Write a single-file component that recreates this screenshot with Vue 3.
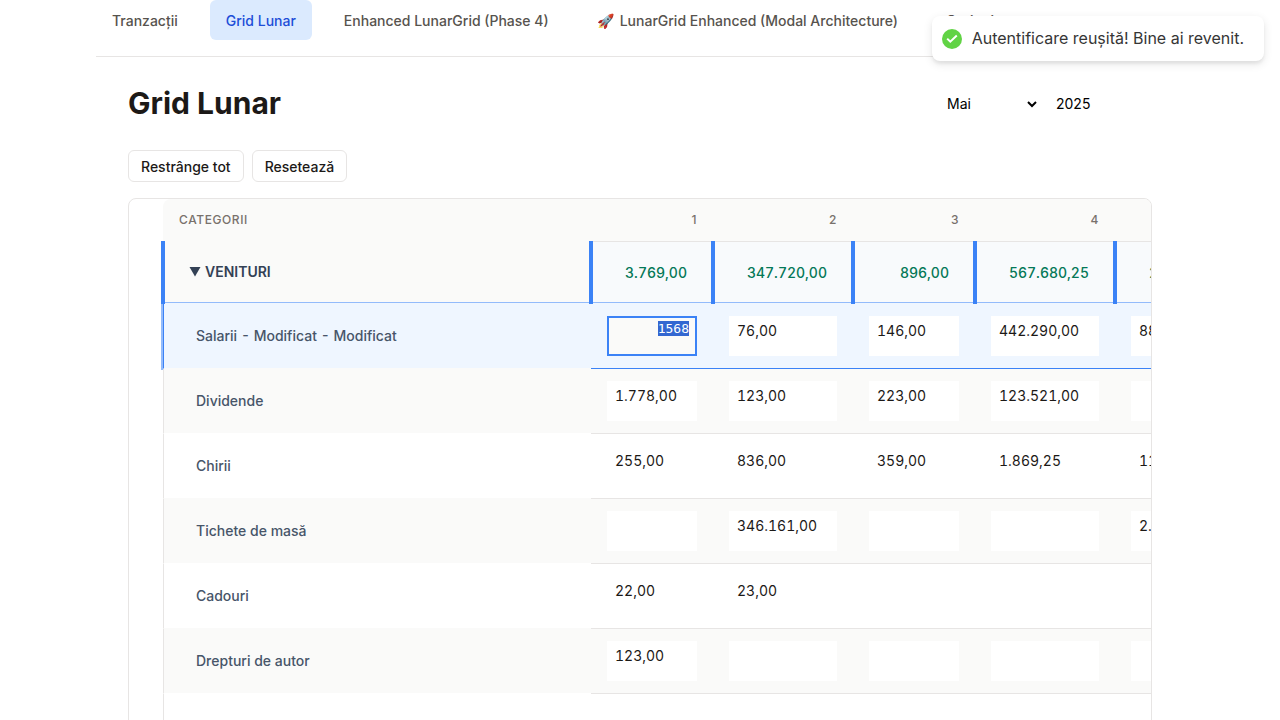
<script setup>
import { ref, onMounted } from 'vue'

const tabs = [
  { label: 'Tranzacții' },
  { label: 'Grid Lunar' },
  { label: 'Enhanced LunarGrid (Phase 4)' },
  { icon: '🚀', label: 'LunarGrid Enhanced (Modal Architecture)' },
  { label: 'Opțiuni' }
]
const activeTab = ref('Grid Lunar')
const month = ref('Mai')
const year = ref(2025)
const days = ['1', '2', '3', '4', '']
const totals = ['3.769,00', '347.720,00', '896,00', '567.680,25', '208.124,00']
const rows = [
  { name: 'Salarii - Modificat - Modificat', selected: true, values: ['', '76,00', '146,00', '442.290,00', '88.012,00'] },
  { name: 'Dividende', values: ['1.778,00', '123,00', '223,00', '123.521,00', ''] },
  { name: 'Chirii', values: ['255,00', '836,00', '359,00', '1.869,25', '117.112,00'] },
  { name: 'Tichete de masă', values: ['', '346.161,00', '', '', '2.000,00'] },
  { name: 'Cadouri', values: ['22,00', '23,00', '', '', ''] },
  { name: 'Drepturi de autor', values: ['123,00', '', '', '', ''] },
  { name: '', values: ['', '', '', '', ''] }
]
const draft = ref('1568')
const editor = ref(null)

onMounted(() => {
  const input = editor.value?.[0]
  input?.focus()
  input?.select()
})
</script>

<template>
  <div class="page">
    <div class="shell">
      <nav class="tabs">
        <a v-for="tab in tabs" :key="tab.label" href="#" class="tab" :class="{ active: tab.label === activeTab }" @click.prevent="activeTab = tab.label"><span v-if="tab.icon" class="tab-icon">{{ tab.icon }}</span>{{ tab.label }}</a>
      </nav>
      <main class="content">
        <header class="heading">
          <h1>Grid Lunar</h1>
          <div class="period">
            <select v-model="month" class="month" aria-label="Luna">
              <option>Mai</option>
            </select>
            <input v-model="year" class="year" type="number" aria-label="Anul" />
          </div>
        </header>
        <div class="actions">
          <button type="button" class="action">Restrânge tot</button>
          <button type="button" class="action">Resetează</button>
        </div>
        <section class="grid-box">
          <table class="grid">
            <colgroup>
              <col class="c-name" />
              <col class="c-narrow" />
              <col class="c-wide" />
              <col class="c-narrow" />
              <col class="c-wide" />
              <col class="c-wide" />
            </colgroup>
            <thead>
              <tr>
                <th class="name-head" scope="col">Categorii</th>
                <th v-for="(day, i) in days" :key="i" scope="col">{{ day }}</th>
              </tr>
            </thead>
            <tbody>
              <tr class="total">
                <th scope="row"><button type="button" class="toggle"><svg width="12" height="10" viewBox="0 0 12 10" aria-hidden="true"><path d="M0.5 0H11.5L6 9.5Z" fill="currentColor" /></svg>VENITURI</button></th>
                <td v-for="(total, i) in totals" :key="i">{{ total }}</td>
              </tr>
              <tr v-for="(row, r) in rows" :key="r" class="item" :class="{ selected: row.selected }">
                <th scope="row">{{ row.name }}</th>
                <td v-for="(value, i) in row.values" :key="i">
                  <input v-if="row.selected && i === 0" ref="editor" v-model="draft" class="editor" aria-label="Salarii, ziua 1" />
                  <button v-else type="button" class="cell">{{ value }}</button>
                </td>
              </tr>
            </tbody>
          </table>
        </section>
      </main>
    </div>
    <div class="toast" role="status">
      <svg width="20" height="20" viewBox="0 0 20 20" aria-hidden="true">
        <circle cx="10" cy="10" r="10" fill="#61d345" />
        <path d="M5.2 9.6L8.3 12.7L14.8 6.6" fill="none" stroke="#fff" stroke-width="2" />
      </svg>
      <span>Autentificare reușită! Bine ai revenit.</span>
    </div>
  </div>
</template>

<style>
html,
body {
  margin: 0;
  background: #fff;
}
</style>

<style scoped>
* {
  box-sizing: border-box;
}
.page {
  height: 100vh;
  overflow: hidden;
  font-family: Inter, "Noto Sans", sans-serif;
  font-size: 14px;
  line-height: 20px;
  color: #1c1917;
}
button,
input,
select {
  font: inherit;
  margin: 0;
}
.shell {
  padding: 0 96px;
}
.tabs {
  display: flex;
  gap: 16px;
  padding-bottom: 16px;
  border-bottom: 1px solid #e7e5e4;
  white-space: nowrap;
}
.tab {
  padding: 11px 16px 9px;
  border-radius: 6px;
  font-weight: 500;
  color: #57534e;
  text-decoration: none;
}
.tab.active {
  background: #dbeafe;
  color: #1d4ed8;
}
.tab-icon {
  margin-right: 6px;
}
.content {
  padding: 24px 32px 0;
}
.heading {
  display: flex;
  align-items: center;
  justify-content: space-between;
  height: 45px;
}
h1 {
  margin: 0;
  padding-bottom: 2px;
  font-size: 30px;
  line-height: 36px;
  font-weight: 700;
}
.period {
  display: flex;
  gap: 8px;
}
.month,
.year {
  border: 0;
  background: transparent;
  color: #000;
  height: 32px;
}
.month {
  width: 97px;
  padding: 0;
}
.year {
  width: 104px;
  padding: 0 8px;
}
.actions {
  display: flex;
  gap: 8px;
  margin: 24px 0 16px;
}
.action {
  height: 32px;
  padding: 2px 12px 0;
  border: 1px solid #e7e5e4;
  border-radius: 6px;
  background: #fff;
  color: #1c1917;
  font-weight: 500;
}
.grid-box {
  overflow: hidden;
  padding-left: 34px;
  border: 1px solid #e7e5e4;
  border-radius: 8px;
}
.grid {
  width: 1092px;
  table-layout: fixed;
  border-collapse: separate;
  border-spacing: 0;
}
.c-name {
  width: 428px;
}
.c-narrow {
  width: 122px;
}
.c-wide {
  width: 140px;
}
th,
td {
  padding: 0;
}
thead th {
  height: 43px;
  padding: 0 16px;
  border-bottom: 1px solid #e7e5e4;
  background: #fafaf9;
  color: #78716c;
  font-size: 12px;
  font-weight: 500;
  letter-spacing: 0.6px;
  text-align: right;
}
thead .name-head {
  border-bottom-color: #fafaf9;
  border-top-left-radius: 8px;
  text-align: left;
  text-transform: uppercase;
}
.total th,
.total td {
  position: relative;
  height: 61px;
  border-bottom: 1px solid #93bbfb;
}
.total th {
  padding-left: 26px;
  background: #fafaf9;
  text-align: left;
}
.total td {
  padding: 2px 26px 0 0;
  background: #f8fafc;
  color: #047857;
  font-weight: 500;
  font-variant-numeric: tabular-nums;
  text-align: right;
}
.total th::before,
.total td::before {
  content: "";
  position: absolute;
  z-index: 1;
  top: -1px;
  bottom: -2px;
  left: -2px;
  width: 4px;
  background: #3b82f6;
}
.toggle {
  display: flex;
  align-items: center;
  gap: 4px;
  padding: 0;
  border: 0;
  background: none;
  color: #334155;
  font-weight: 600;
}
.item th {
  position: relative;
  padding-left: 32px;
  border-left: 1px solid #e7e5e4;
  border-bottom: 1px solid #fafaf9;
  color: #475569;
  font-weight: 500;
  font-variant-numeric: tabular-nums;
  text-align: left;
}
.item td {
  height: 65px;
  padding: 12px 16px;
  border-bottom: 1px solid #e7e5e4;
}
.item:nth-child(odd) {
  background: #fafaf9;
}
.item:nth-child(odd) th {
  border-bottom-color: #fff;
}
.item.selected {
  background: #eff6ff;
}
.item.selected th {
  border-left-color: #3b82f6;
}
.item.selected th::before {
  content: "";
  position: absolute;
  top: 1px;
  bottom: -2px;
  left: -3px;
  width: 2px;
  background: #93bbfb;
}
.item.selected td {
  height: 66px;
  padding-top: 13px;
  border-bottom-color: #3b82f6;
}
.cell,
.editor {
  display: block;
  width: 100%;
  height: 40px;
}
.cell {
  display: flex;
  align-items: flex-start;
  padding: 5px 8px;
  border: 0;
  background: #fff;
  color: #1c1917;
  font-variant-numeric: tabular-nums;
}
.editor {
  padding: 0 6px 16px;
  border: 2px solid #3b82f6;
  outline: 0;
  background: #fafaf9;
  color: #1c1917;
  font-family: "DejaVu Sans Mono", monospace;
  font-size: 13px;
  text-align: right;
}
.editor::selection {
  background: #3367d1;
  color: #fff;
}
.toast {
  position: absolute;
  top: 16px;
  right: 16px;
  display: flex;
  align-items: center;
  padding: 8px 10px;
  border-radius: 8px;
  background: #fff;
  color: #363636;
  font-size: 16px;
  line-height: 21px;
  box-shadow: 0 3px 10px rgba(0, 0, 0, 0.1), 0 3px 3px rgba(0, 0, 0, 0.05);
}
.toast span {
  margin: 4px 10px;
}
</style>
